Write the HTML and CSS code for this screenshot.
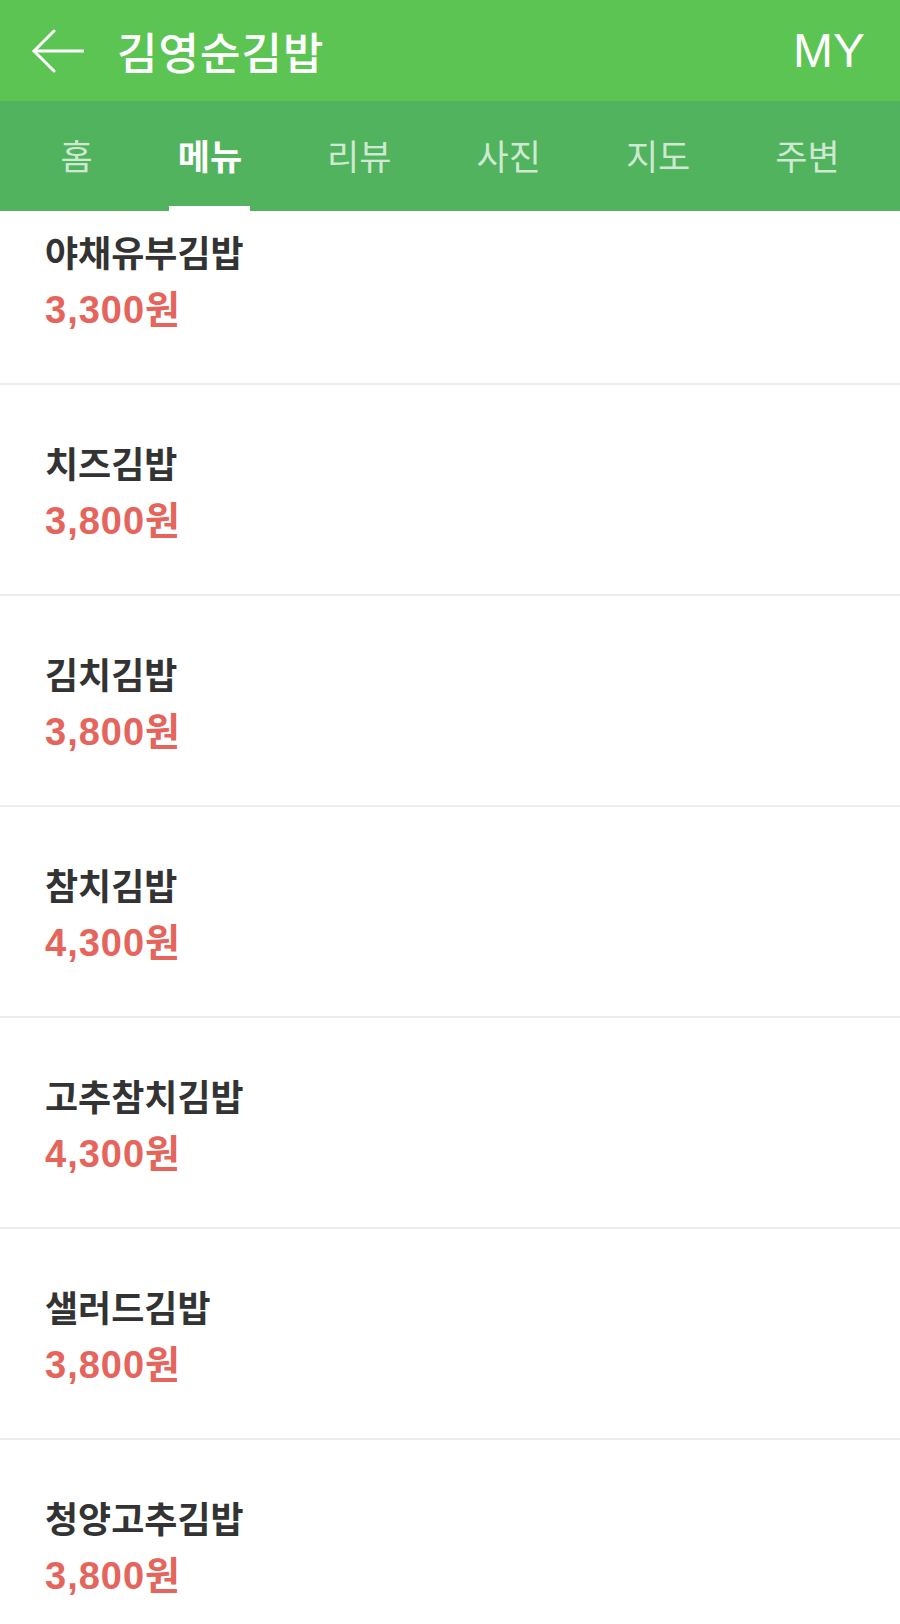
FILE: index.html
```html
<!DOCTYPE html>
<html lang="ko">
<head>
<meta charset="utf-8">
<title>김영순김밥 메뉴</title>
<link rel="stylesheet" href="styles.css">
</head>
<body>
<div class="page">
  <header class="topbar">
    <svg class="back" width="52" height="44" viewBox="0 0 52 44" aria-hidden="true">
      <polyline points="22,2 2,22 22,42" fill="none" stroke="#fff" stroke-width="3" stroke-linecap="round" stroke-linejoin="round"/>
      <line x1="2" y1="22" x2="51" y2="22" stroke="#fff" stroke-width="3" stroke-linecap="round"/>
    </svg>
    <h1 class="title">김영순김밥</h1>
    <span class="my">MY</span>
  </header>
  <nav class="tabs">
    <span class="tab">홈</span>
    <span class="tab active">메뉴</span>
    <span class="tab">리뷰</span>
    <span class="tab">사진</span>
    <span class="tab">지도</span>
    <span class="tab">주변</span>
  </nav>
  <main class="list-wrap">
    <ul class="menu-list">
      <li class="item"><p class="name">야채유부김밥</p><p class="price">3,300원</p></li>
      <li class="item"><p class="name">치즈김밥</p><p class="price">3,800원</p></li>
      <li class="item"><p class="name">김치김밥</p><p class="price">3,800원</p></li>
      <li class="item"><p class="name">참치김밥</p><p class="price">4,300원</p></li>
      <li class="item"><p class="name">고추참치김밥</p><p class="price">4,300원</p></li>
      <li class="item"><p class="name">샐러드김밥</p><p class="price">3,800원</p></li>
      <li class="item"><p class="name">청양고추김밥</p><p class="price">3,800원</p></li>
    </ul>
  </main>
</div>
</body>
</html>
```
FILE: styles.css
```css
html, body {
  margin: 0;
  padding: 0;
  background: #ffffff;
}
body {
  font-family: "Noto Sans CJK KR", "Liberation Sans", sans-serif;
}
.page {
  width: 900px;
  height: 1624px;
  overflow: hidden;
  display: flex;
  flex-direction: column;
}
.topbar {
  height: 101px;
  flex: none;
  background: #5bc453;
  display: flex;
  align-items: center;
  padding: 0 35px 0 32px;
  box-sizing: border-box;
  color: #fff;
}
.back {
  flex: none;
  display: block;
}
.title {
  margin: 0 0 0 33px;
  font-size: 44px;
  font-weight: 500;
  letter-spacing: 1px;
  line-height: 1;
  flex: 1;
}
.my {
  font-family: "Liberation Sans", sans-serif;
  font-size: 48px;
  line-height: 1;
}
.tabs {
  height: 110px;
  flex: none;
  background: #52b35e;
  display: flex;
  align-items: stretch;
  padding-left: 18px;
  box-sizing: border-box;
}
.tab {
  position: relative;
  display: flex;
  align-items: center;
  padding: 0 42.5px 4px;
  font-size: 35px;
  letter-spacing: 0;
  color: rgba(255, 255, 255, 0.72);
}
.tab.active {
  color: #fff;
  font-weight: 700;
}
.tab.active::after {
  content: "";
  position: absolute;
  left: 50%;
  bottom: 0;
  width: 81px;
  height: 5px;
  margin-left: -41px;
  background: #fff;
}
.list-wrap {
  flex: 1;
  overflow: hidden;
}
.menu-list {
  list-style: none;
  margin: -37px 0 0;
  padding: 0;
}
.item {
  padding: 0 45px;
  border-bottom: 2px solid #ececee;
  height: 209px;
  display: flex;
  flex-direction: column;
}
.name {
  margin: 53px 0 0;
  font-size: 36px;
  font-weight: 700;
  letter-spacing: 0;
  line-height: 48px;
  color: #333333;
}
.price {
  margin: 11px 0 0;
  font-family: "Liberation Sans", "Noto Sans CJK KR", sans-serif;
  font-size: 38px;
  font-weight: 700;
  letter-spacing: 1px;
  line-height: 48px;
  color: #e5645b;
}
```
